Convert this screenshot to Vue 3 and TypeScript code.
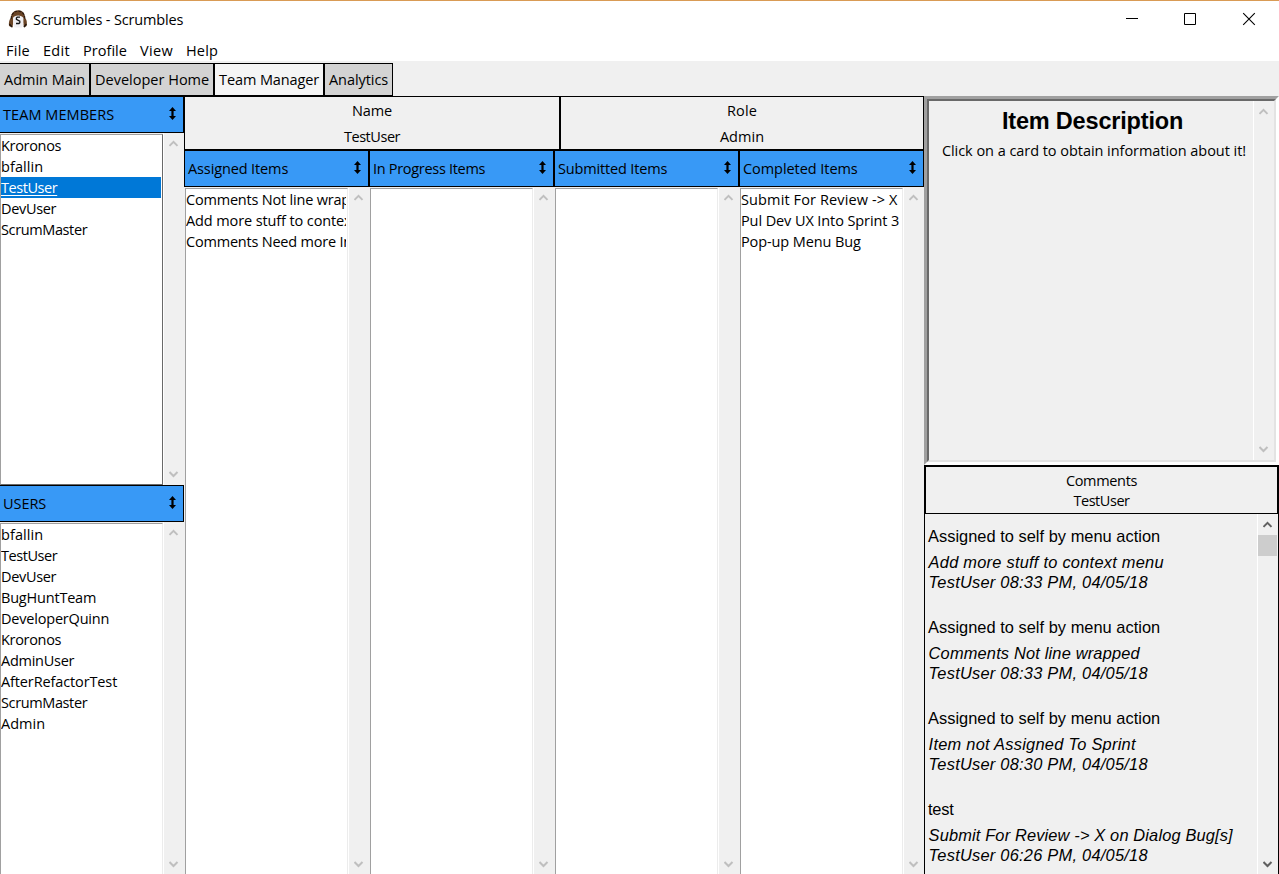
<script setup lang="ts">
import type { Directive } from 'vue'

interface Label { t: string; w: number }
interface Column { title: Label; items: Label[] }
interface Comment { body: Label; item: Label; meta: Label }

const sideBearing = 0.8
const vFit: Directive<HTMLElement, number> = {
  mounted(el, { value }) {
    if (!value) return
    const n = (el.textContent ?? '').length
    const natural = el.getBoundingClientRect().width
    el.style.letterSpacing = `${(value - sideBearing - natural) / n}px`
  },
}

const l = (t: string, w: number): Label => ({ t, w })

const menus = [l('File', 24), l('Edit', 27), l('Profile', 44), l('View', 33), l('Help', 32)]
const tabs = [
  { ...l('Admin Main', 82), cls: 'first' },
  { ...l('Developer Home', 115), cls: '' },
  { ...l('Team Manager', 101), cls: 'active' },
  { ...l('Analytics', 60), cls: '' },
]
const selected = 'TestUser'
const team = [l('Kroronos', 61), l('bfallin', 43), l('TestUser', 57), l('DevUser', 56), l('ScrumMaster', 87)]
const users = [
  l('bfallin', 43), l('TestUser', 57), l('DevUser', 56), l('BugHuntTeam', 96), l('DeveloperQuinn', 109),
  l('Kroronos', 61), l('AdminUser', 74), l('AfterRefactorTest', 117), l('ScrumMaster', 87), l('Admin', 45),
]
const columns: Column[] = [
  {
    title: l('Assigned Items', 101),
    items: [l('Comments Not line wrapped', 190), l('Add more stuff to context menu', 214), l('Comments Need more Info', 180)],
  },
  { title: l('In Progress Items', 113), items: [] },
  { title: l('Submitted Items', 110), items: [] },
  {
    title: l('Completed Items', 115.5),
    items: [l('Submit For Review -> X', 157.4), l('Pul Dev UX Into Sprint 3', 159), l('Pop-up Menu Bug', 120.5)],
  },
]
const comments: Comment[] = [
  { body: l('Assigned to self by menu action', 233), item: l('Add more stuff to context menu', 236), meta: l('TestUser 08:33 PM, 04/05/18', 220) },
  { body: l('Assigned to self by menu action', 233), item: l('Comments Not line wrapped', 212), meta: l('TestUser 08:33 PM, 04/05/18', 220) },
  { body: l('Assigned to self by menu action', 233), item: l('Item not Assigned To Sprint', 208), meta: l('TestUser 08:30 PM, 04/05/18', 220) },
  { body: l('test', 26.5), item: l('Submit For Review -> X on Dialog Bug[s]', 305), meta: l('TestUser 06:26 PM, 04/05/18', 220) },
]
const up = 'M0.5 5.9 L4.5 1.9 L8.5 5.9'
const down = 'M0.5 1 L4.5 5 L8.5 1'
const sortArrow = 'M3.5 0 L7 4 H4.6 V9 H7 L3.5 13 L0 9 H2.4 V4 H0 Z'
</script>

<template>
  <div class="window">
    <header class="titlebar">
      <svg class="logo" width="20" height="20" viewBox="0 0 20 20">
        <path d="M1 17 C0.4 13 1.6 10 3 9 C3 4 6 1.2 10.3 1.2 C14.5 1.2 17 4 17 9 C18.6 10.5 19.4 13 18.6 17 L16 18.5 L14 8 H6 L4.5 18.5 Z" fill="#6b4526" />
        <path d="M3.2 10 C3.2 5 6 2.2 10.2 2.2 C14.4 2.2 16.8 5 16.8 10" fill="none" stroke="#2c1a10" stroke-width="1.2" stroke-dasharray="3 1" />
        <path d="M1.4 15 L4 18 M18.4 15 L16 18" fill="none" stroke="#24160d" stroke-width="1.4" />
        <path d="M5 9 C6 5.6 14 5.6 15.4 9 V15 L14 18.6 H6.6 L5 15 Z" fill="#f1f0f3" />
        <path d="M12 8.2 H9.2 L8.4 9 V10.4 L11.8 12.2 V13.7 L11 14.5 H8" fill="none" stroke="#151515" stroke-width="1.3" />
      </svg>
      <span v-fit="151" class="caption">Scrumbles - Scrumbles</span>
      <svg class="controls" width="128" height="13" viewBox="0 0 128 13" fill="none" stroke="#000">
        <path d="M0 5.5 H12 M58.5 0.5 H69.5 V11.5 H58.5 Z" />
        <path d="M117.2 0.2 L128.8 11.8 M128.8 0.2 L117.2 11.8" stroke-width="1.1" />
      </svg>
    </header>
    <nav class="menubar">
      <span v-for="m in menus" :key="m.t" class="menu"><span v-fit="m.w + 0.8">{{ m.t }}</span></span>
    </nav>
    <div class="tabs">
      <div v-for="t in tabs" :key="t.t" class="tab" :class="t.cls"><span v-fit="t.w">{{ t.t }}</span></div>
    </div>

    <div class="body">
      <aside class="side">
        <section class="team">
          <div class="head">
            <span v-fit="112">TEAM MEMBERS</span>
            <svg width="7" height="13" viewBox="0 0 7 13"><path :d="sortArrow" /></svg>
          </div>
          <div class="listrow">
            <ul class="list sunken">
              <li v-for="m in team" :key="m.t" :class="{ sel: m.t === selected }"><span v-fit="m.w">{{ m.t }}</span></li>
            </ul>
            <div class="scroll">
              <svg width="10" height="7"><path :d="up" /></svg>
              <svg width="10" height="7"><path :d="down" /></svg>
            </div>
          </div>
        </section>
        <section class="users">
          <div class="head">
            <span v-fit="44">USERS</span>
            <svg width="7" height="13" viewBox="0 0 7 13"><path :d="sortArrow" /></svg>
          </div>
          <div class="listrow">
            <ul class="list">
              <li v-for="u in users" :key="u.t"><span v-fit="u.w">{{ u.t }}</span></li>
            </ul>
            <div class="scroll">
              <svg width="10" height="7"><path :d="up" /></svg>
              <svg width="10" height="7"><path :d="down" /></svg>
            </div>
          </div>
        </section>
      </aside>

      <main class="main">
        <div class="profile">
          <div class="box name"><span v-fit="41">Name</span><span v-fit="57">TestUser</span></div>
          <div class="box role"><span v-fit="31">Role</span><span v-fit="45">Admin</span></div>
        </div>
        <div class="columns">
          <section v-for="c in columns" :key="c.title.t" class="column">
            <div class="head">
              <span v-fit="c.title.w">{{ c.title.t }}</span>
              <svg width="7" height="13" viewBox="0 0 7 13"><path :d="sortArrow" /></svg>
            </div>
            <div class="listrow">
              <ul class="list">
                <li v-for="i in c.items" :key="i.t"><span v-fit="i.w">{{ i.t }}</span></li>
              </ul>
              <div class="scroll">
                <svg width="10" height="7"><path :d="up" /></svg>
                <svg width="10" height="7"><path :d="down" /></svg>
              </div>
            </div>
          </section>
        </div>
      </main>

      <aside class="detail">
        <div class="desc">
          <div class="descinner">
            <div class="desctext">
              <h1><span v-fit="182">Item Description</span></h1>
              <p><span v-fit="305">Click on a card to obtain information about it!</span></p>
            </div>
            <div class="scroll">
              <svg width="10" height="7"><path :d="up" /></svg>
              <svg width="10" height="7"><path :d="down" /></svg>
            </div>
          </div>
        </div>
        <div class="chead"><span v-fit="72">Comments</span><span v-fit="57">TestUser</span></div>
        <div class="cbody">
          <div class="clist">
            <article v-for="(c, i) in comments" :key="i">
              <div class="say"><span v-fit="c.body.w">{{ c.body.t }}</span></div>
              <div class="meta"><span v-fit="c.item.w">{{ c.item.t }}</span></div>
              <div class="meta"><span v-fit="c.meta.w">{{ c.meta.t }}</span></div>
            </article>
          </div>
          <div class="scroll live">
            <svg width="10" height="7"><path :d="up" /></svg>
            <i class="thumb"></i>
            <svg width="10" height="7"><path :d="down" /></svg>
          </div>
        </div>
      </aside>
    </div>
  </div>
</template>

<style>
body { margin: 0; overflow: hidden; }
</style>

<style scoped>
* { box-sizing: border-box; }
.window {
  width: 1279px; height: 874px; overflow: hidden; display: flex; flex-direction: column;
  background: #f0f0f0; color: #000; font: 14.5px/21px "Open Sans", "Noto Sans", sans-serif; white-space: nowrap;
}
span { display: inline-block; }
.titlebar { height: 40px; flex: none; background: #fff; border-top: 1px solid #d99b55; display: flex; align-items: flex-start; padding-left: 8px; }
.logo { margin-top: 8px; }
.caption { margin: 8px 0 0 5px; }
.controls { margin: 12px 25px 0 auto; overflow: visible; }
.menubar { height: 21px; flex: none; background: #fff; display: flex; padding-left: 6px; gap: 13px; }
.menu { line-height: 21px; }
.tabs { height: 35px; flex: none; padding-top: 2px; display: flex; }
.tab { height: 33px; border: 1px solid #000; background: #d3d3d3; padding: 0 4px; line-height: 32px; }
.tab.first { border-left: 0; width: 90px; }
.tab:nth-child(2) { width: 124px; }
.tab:nth-child(3) { width: 110px; }
.tab:nth-child(4) { width: 69px; }
.tab.active { background: #f5f5f5; }
.body { flex: 1; min-height: 0; display: flex; }

.head { height: 37px; flex: none; border: 1px solid #000; background: #3899f6; display: flex; justify-content: space-between; padding: 0 7px 0 3px; line-height: 35px; }
.head svg { margin-top: 10px; }
.listrow { flex: 1; min-height: 0; display: flex; }
.list { margin: 0; padding: 0 1px 0 0; list-style: none; background: #fff; border: 1px solid #a0a0a0; border-right-color: #ececec; border-bottom: 0; width: 163px; flex: none; }
.list li { height: 21px; overflow: hidden; }
.scroll { display: flex; flex-direction: column; justify-content: space-between; background: #f0f0f0; border-left: 1px solid #fff; }
.scroll svg { flex: none; fill: none; stroke: #bfbfbf; stroke-width: 2; }

.side { width: 184px; display: flex; flex-direction: column; }
.side .head { border-left: 0; }
.team { height: 389px; flex: none; display: flex; flex-direction: column; }
.users { flex: 1; min-height: 0; display: flex; flex-direction: column; }
.side .list { margin-top: 1px; }
.side .list.sunken { border-right-color: #696969; border-bottom: 1px solid #696969; }
.side .scroll { width: 21px; padding: 7px 0 6px 5px; }
.team .scroll { padding-bottom: 7px; }
.sel { background: #0078d7; color: #fff; }
.sel span { text-decoration: underline; text-underline-offset: 2px; }

.main { width: 740px; display: flex; flex-direction: column; }
.profile { height: 54px; flex: none; display: flex; }
.box { border: 1px solid #000; display: flex; flex-direction: column; align-items: center; line-height: 26px; padding-top: 1px; }
.name { width: 376px; }
.role { width: 364px; }
.columns { flex: 1; min-height: 0; display: flex; }
.column { width: 185px; display: flex; flex-direction: column; }
.column .listrow { padding: 1px 0 0 1px; }
.column .scroll { width: 21px; padding: 6px 0 6px 5px; }

.detail { width: 355px; display: flex; flex-direction: column; }
.desc { height: 369px; flex: none; border: 3px solid; border-color: #a0a0a0 #fff #fff #a0a0a0; }
.descinner { height: 363px; border: 2px solid; border-color: #696969 #e3e3e3 #e3e3e3 #696969; display: flex; }
.desctext { width: 324px; text-align: center; padding-left: 6px; }
h1 { margin: 6px 0 0; font: bold 23.5px/28px "Liberation Sans", Arial, sans-serif; padding-right: 3px; }
p { margin: 5px 0 0; }
.desc .scroll { width: 21px; padding: 7px 0 7px 5px; }
.chead { height: 49px; flex: none; border: 2px solid #000; border-bottom-width: 1px; display: flex; flex-direction: column; align-items: center; line-height: 20px; padding-top: 4px; }
.cbody { flex: 1; min-height: 0; border: 1px solid #000; border-width: 0 1px; display: flex; overflow: hidden; }
.clist { width: 332px; padding: 10px 0 0 3px; font: 16.4px/20px "Liberation Sans", Arial, sans-serif; }
article { height: 91px; }
.say { height: 28px; line-height: 24px; }
.meta { font-style: italic; height: 20px; padding-left: 0.6px; }
.live { width: 21px; flex: none; padding: 7px 0 6px; }
.scroll.live svg { stroke: #606060; margin-left: 5px; }
.thumb { height: 21px; flex: none; background: #cdcdcd; margin: 7px 1px auto 0; }
</style>
